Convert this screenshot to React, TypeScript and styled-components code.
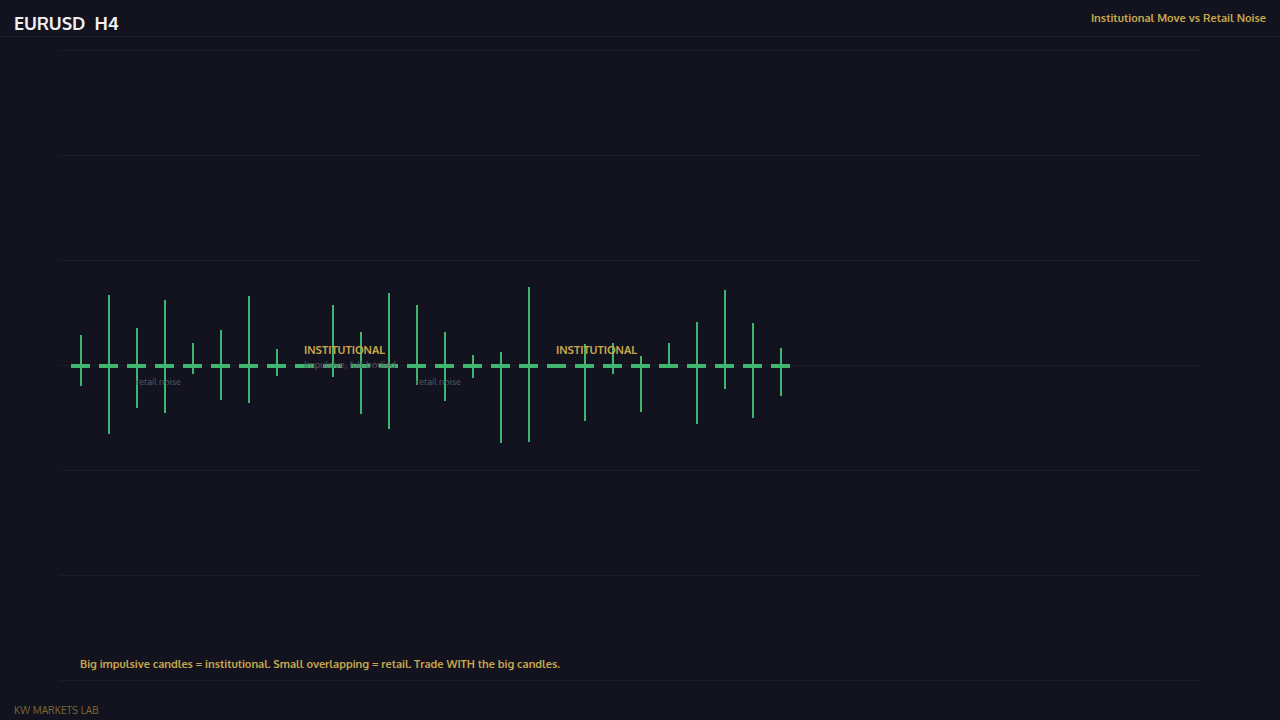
import React from "react";
import styled, { createGlobalStyle } from "styled-components";

const Global = createGlobalStyle`
  html, body { margin: 0; padding: 0; background: #12131f; }
  #root { width: 1280px; height: 720px; overflow: hidden; }
`;

const FONT = `"Oxygen", "Noto Sans", "Liberation Sans", sans-serif`;

const Page = styled.div`
  width: 1280px;
  height: 720px;
  display: flex;
  flex-direction: column;
  background: #12131f;
  font-family: ${FONT};
`;

const Header = styled.header`
  height: 36px;
  flex: none;
  display: flex;
  justify-content: space-between;
  align-items: flex-start;
  padding: 0 14px;
  border-bottom: 1px solid #1c1d2c;
`;

const Title = styled.h1`
  margin: 12px 0 0;
  font-size: 18px;
  line-height: 22px;
  letter-spacing: -0.1px;
  font-weight: 700;
  color: #f0f0f0;
  white-space: pre;
`;

const Subtitle = styled.div`
  margin-top: 11px;
  font-size: 11px;
  line-height: 15px;
  font-weight: 700;
  color: #c9a84c;
`;

const Stage = styled.main`
  position: relative;
  flex: 1;
  display: flex;
  flex-direction: column;
  justify-content: flex-end;
  padding: 0 0 28px 80px;
`;

const ChartSvg = styled.svg`
  position: absolute;
  left: 0;
  top: 0;
`;

const Caption = styled.p`
  position: relative;
  margin: 0;
  font-size: 11px;
  line-height: 15px;
  letter-spacing: -0.02px;
  font-weight: 700;
  color: #c9a84c;
`;

const Note = styled.div<{ $x: number; $y: number }>`
  position: absolute;
  left: ${(p) => p.$x}px;
  top: ${(p) => p.$y - 37}px;
  white-space: nowrap;
`;

const InstNote = styled(Note)`
  font-size: 11px;
  line-height: 14px;
  font-weight: 700;
  color: #c9a84c;
`;

const MutedNote = styled(Note)`
  font-size: 9px;
  line-height: 14px;
  color: #5a5a64;
`;

const ImpulseNote = styled(MutedNote)`
  font-size: 9.5px;
`;

const Footer = styled.footer`
  height: 20px;
  flex: none;
  padding-left: 14px;
  font-size: 10px;
  letter-spacing: 0.1px;
  line-height: 20px;
  color: #7d6a32;
`;

const gridY = [50, 155, 260, 365, 470, 575, 680];

type Wick = [number, number] | null;
const wicks: Wick[] = [
  [335, 386], [295, 434], [328, 408], [300, 413], [343, 374], [330, 400],
  [296, 403], [349, 376], null, [305, 377], [332, 414], [293, 429],
  [305, 385], [332, 401], [355, 378], [352, 443], [287, 442], null,
  [344, 421], [343, 374], [356, 412], [343, 366], [322, 424], [290, 389],
  [323, 418], [348, 396],
];

const GREEN = "#3fb56f";

export default function App() {
  return (
    <Page>
      <Global />
      <Header>
        <Title>{"EURUSD  H4"}</Title>
        <Subtitle>Institutional Move vs Retail Noise</Subtitle>
      </Header>
      <Stage>
        <ChartSvg width={1280} height={683} viewBox="0 37 1280 683">
          {gridY.map((y) => (
            <rect key={y} x={60} y={y} width={1140} height={1} fill="#1c1d2c" />
          ))}
          {wicks.map((w, i) => {
            const x = 71 + i * 28;
            return (
              <g key={i} fill={GREEN}>
                {w && <rect x={x + 9} y={w[0]} width={2} height={w[1] - w[0]} />}
                <rect x={x} y={364} width={19} height={4} />
              </g>
            );
          })}
        </ChartSvg>
        <InstNote $x={304} $y={343}>INSTITUTIONAL</InstNote>
        <ImpulseNote $x={304} $y={357}>Impulsive, full-bodied</ImpulseNote>
        <MutedNote $x={136} $y={375}>retail noise</MutedNote>
        <MutedNote $x={416} $y={375}>retail noise</MutedNote>
        <InstNote $x={556} $y={343}>INSTITUTIONAL</InstNote>
        <Caption>Big impulsive candles = institutional. Small overlapping = retail. Trade WITH the big candles.</Caption>
      </Stage>
      <Footer>KW MARKETS LAB</Footer>
    </Page>
  );
}
